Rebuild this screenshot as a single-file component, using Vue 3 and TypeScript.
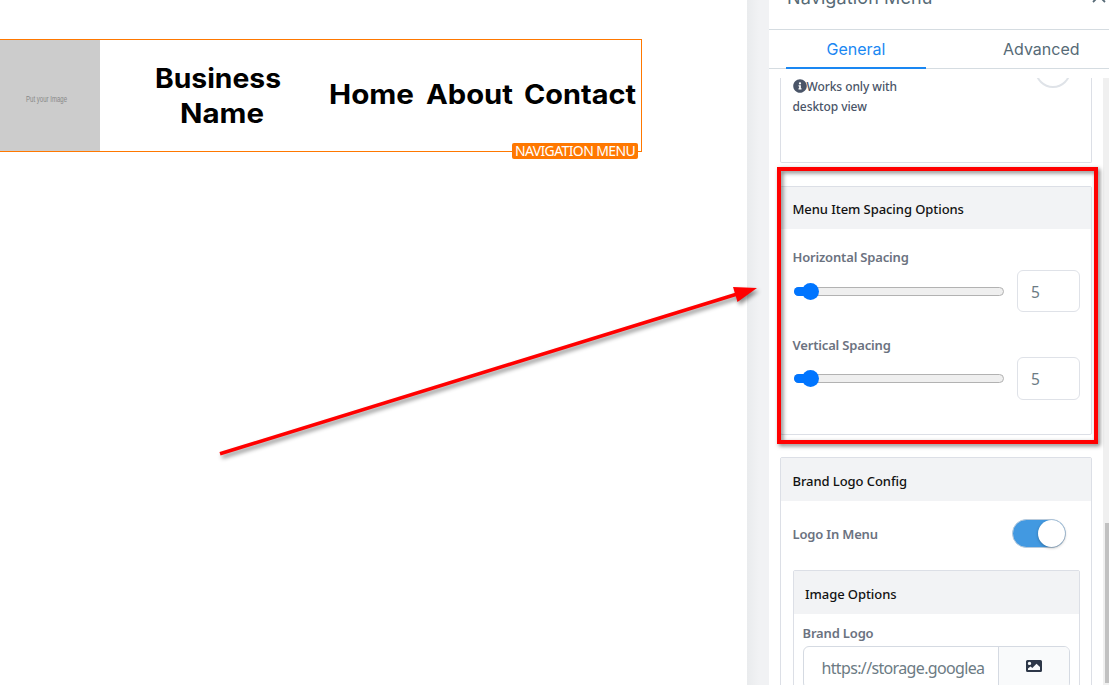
<template>
  <div class="editor">
    <main class="canvas">
      <nav class="site-nav">
        <div class="logo-box">
          <svg class="logo-text" width="41" height="10">
            <text x="0" y="8" textLength="41" lengthAdjust="spacingAndGlyphs">Put your Image</text>
          </svg>
        </div>
        <div class="brand">
          <svg v-for="w in brandWords" :key="w.text" class="word" :width="w.width" height="35">
            <text x="0" y="25" :textLength="w.width" lengthAdjust="spacingAndGlyphs">{{ w.text }}</text>
          </svg>
        </div>
        <div class="links">
          <svg v-for="w in links" :key="w.text" class="word" :width="w.width" height="35">
            <text x="0" y="25" :textLength="w.width" lengthAdjust="spacingAndGlyphs">{{ w.text }}</text>
          </svg>
        </div>
        <span class="nav-tag">NAVIGATION MENU</span>
      </nav>
    </main>
    <div class="gutter"></div>

    <aside class="panel">
      <header class="panel-header">
        <span class="panel-title">Navigation Menu</span>
        <svg class="close" width="14" height="14" viewBox="0 0 14 14">
          <path d="M1 1L13 13M13 1L1 13" />
        </svg>
      </header>
      <div class="tabs">
        <div class="tab active">General</div>
        <div class="tab second">Advanced</div>
      </div>

      <div class="scroll">
        <div class="cards">
          <section class="card hint-card">
            <p class="hint">
              <svg class="info" width="14" height="14" viewBox="0 0 512 512">
                <path
                  d="M256 8C119 8 8 119 8 256s111 248 248 248 248-111 248-248S393 8 256 8zm0 110a42 42 0 1 1 0 84 42 42 0 0 1 0-84zm56 254c0 7-5 12-12 12h-88c-7 0-12-5-12-12v-24c0-7 5-12 12-12h12v-64h-12c-7 0-12-5-12-12v-24c0-7 5-12 12-12h64c7 0 12 5 12 12v100h12c7 0 12 5 12 12v24z"
                />
              </svg><span>Works only with</span><br /><span>desktop view</span>
            </p>
            <span class="knob-off"></span>
          </section>

          <section class="card spacing-card">
            <h3 class="card-head">Menu Item Spacing Options</h3>
            <div v-for="s in sliders" :key="s.label" class="field">
              <label class="label">{{ s.label }}</label>
              <div class="slider-row">
                <div class="slider">
                  <div class="fill" :style="{ width: s.value * 2 + 7 + 'px' }"></div>
                  <div class="thumb"></div>
                </div>
                <div class="number">{{ s.value }}</div>
              </div>
            </div>
          </section>

          <section class="card logo-card">
            <h3 class="card-head">Brand Logo Config</h3>
            <div class="toggle-row">
              <span class="label">Logo In Menu</span>
              <span class="toggle"><span class="toggle-knob"></span></span>
            </div>
            <div class="card inner-card">
              <h3 class="card-head">Image Options</h3>
              <div class="label">Brand Logo</div>
              <div class="url-group">
                <div class="url"><div class="url-text">https://storage.googlea</div></div>
                <div class="pick">
                  <svg width="16" height="12" viewBox="0 0 16 12">
                    <path
                      fill-rule="evenodd"
                      d="M1.5 0h13A1.5 1.5 0 0 1 16 1.5v9a1.5 1.5 0 0 1-1.5 1.5h-13A1.5 1.5 0 0 1 0 10.5v-9A1.5 1.5 0 0 1 1.5 0zM3.5 1.7a1.7 1.7 0 1 0 0 3.4a1.7 1.7 0 0 0 0-3.4zM2 10h12V7L10.5 3.7L6.3 8L4.5 6.4L2 8.6z"
                    />
                  </svg>
                </div>
              </div>
            </div>
          </section>
        </div>
        <div class="scrollbar"><div class="scroll-thumb"></div></div>
      </div>
    </aside>

    <div class="highlight"></div>
    <svg class="arrow" width="1109" height="685" viewBox="0 0 1109 685">
      <path class="shaft" d="M220 453.8L738 293.8" />
      <path class="head" d="M757 288L733 287L737.5 302Z" />
    </svg>
  </div>
</template>

<script setup lang="ts">
interface Word {
  text: string
  width: number
}

interface Slider {
  label: string
  value: number
}

const brandWords: Word[] = [
  { text: 'Business', width: 126 },
  { text: 'Name', width: 84 }
]

const links: Word[] = [
  { text: 'Home', width: 85 },
  { text: 'About', width: 87 },
  { text: 'Contact', width: 112 }
]

const sliders: Slider[] = [
  { label: 'Horizontal Spacing', value: 5 },
  { label: 'Vertical Spacing', value: 5 }
]
</script>

<style>
body {
  margin: 0;
  overflow: hidden;
}
</style>

<style scoped>
.editor {
  position: relative;
  display: flex;
  width: 1109px;
  height: 685px;
  overflow: hidden;
  background: #fff;
  font-family: 'Noto Sans', 'Open Sans', sans-serif;
}

.editor * {
  box-sizing: border-box;
}

/* canvas */
.canvas {
  width: 747px;
  padding-top: 39px;
}

.site-nav {
  position: relative;
  display: flex;
  width: 642px;
  height: 113px;
  border: 1px solid #ff7800;
  border-left: none;
}

.logo-box {
  display: flex;
  width: 100px;
  padding: 6px 0 0 26px;
  align-items: center;
  background: #ccc;
}

.logo-text {
  overflow: visible;
  font: 8.5px 'Liberation Sans', sans-serif;
  fill: #888;
}

.brand {
  display: flex;
  flex-direction: column;
  align-items: center;
  width: 236px;
  padding: 23px 0 0;
  margin-right: -7px;
}

.word {
  display: block;
  flex: none;
  overflow: visible;
  font: 700 27px 'Inter', sans-serif;
}

.brand .word:last-child {
  margin-left: 8px;
}

.links {
  display: flex;
  gap: 11.5px;
  padding-top: 39px;
}

.nav-tag {
  position: absolute;
  right: 3px;
  bottom: -8px;
  width: 126px;
  height: 16px;
  border-radius: 2px;
  background: #ff7800;
  color: #fff;
  font-size: 14px;
  line-height: 16px;
  letter-spacing: -0.62px;
  text-align: center;
  white-space: nowrap;
}

.gutter {
  width: 22px;
  background: linear-gradient(90deg, #e9ebed, #f1f2f4 12px);
}

/* settings panel */
.panel {
  display: flex;
  flex-direction: column;
  width: 340px;
  background: #fff;
}

.panel-header {
  display: flex;
  justify-content: space-between;
  height: 30px;
  padding: 0 3px 0 18px;
  border-bottom: 1px solid #d5dce1;
  font-family: 'Inter', sans-serif;
  font-size: 18px;
  letter-spacing: 0.12px;
  color: #566a76;
}

.panel-title {
  margin-top: -13px;
  line-height: 22px;
}

.close {
  margin-top: -11px;
  stroke: #566a76;
  stroke-width: 1.8;
  fill: none;
}

.tabs {
  display: flex;
  height: 39px;
  padding-left: 17px;
  border-bottom: 1px solid #d5dce1;
  font-family: 'Inter', sans-serif;
  font-size: 16px;
  line-height: 39px;
  color: #566a76;
}

.tab {
  height: 39px;
}

.tab.active {
  width: 140px;
  border-bottom: 2px solid #1a87f2;
  color: #1a87f2;
  text-align: center;
}

.tab.second {
  margin-left: 77px;
}

.scroll {
  display: flex;
  justify-content: space-between;
  height: 607px;
  margin-top: 9px;
  padding-left: 11px;
  overflow: hidden;
}

.cards {
  width: 312px;
}

.card {
  border: 1px solid #dcdfe6;
  border-radius: 2px;
}

.card-head {
  display: flex;
  align-items: center;
  height: 42px;
  margin: 0;
  padding: 2px 12px 0 11.5px;
  background: #f2f3f5;
  color: #111;
  font-size: 13px;
  font-weight: 500;
  letter-spacing: -0.07px;
  white-space: nowrap;
}

.hint-card {
  display: flex;
  justify-content: space-between;
  height: 85px;
  margin-bottom: 23px;
  padding: 0 20px 0 11.5px;
  border-top: none;
  border-radius: 0 0 2px 2px;
}

.hint {
  margin: -1px 0 0;
  color: #4a5568;
  font-size: 12px;
  font-weight: 500;
  line-height: 20px;
  letter-spacing: -0.08px;
  white-space: nowrap;
}

.info {
  vertical-align: -2px;
  fill: #4a5568;
}

.knob-off {
  width: 36px;
  height: 36px;
  margin-top: -26px;
  border: 2px solid #dfe3e8;
  border-radius: 50%;
}

.spacing-card {
  height: 249px;
  margin-bottom: 22px;
}

.field {
  height: 87px;
  padding: 18px 11px 0 11.5px;
}

.field + .field {
  padding-top: 19px;
}

.label {
  display: block;
  color: #6b7280;
  font-size: 13px;
  font-weight: 600;
  line-height: 20px;
  letter-spacing: -0.17px;
  white-space: nowrap;
}

.slider-row {
  display: flex;
  align-items: center;
  justify-content: space-between;
  height: 42px;
  margin-top: 3px;
}

.field + .field .slider-row {
  height: 43px;
  margin-top: 2px;
}

.slider {
  display: flex;
  align-items: center;
  width: 210px;
  height: 9px;
  margin-left: 1px;
  border: 1px solid #b2b2b2;
  border-radius: 5px;
  background: #efefef;
}

.field + .field .slider {
  margin-top: -1px;
}

.fill {
  flex: none;
  height: 9px;
  margin-left: -1px;
  border-radius: 5px 0 0 5px;
  background: #0075ff;
}

.thumb {
  flex: none;
  width: 17px;
  height: 17px;
  margin-left: -8.5px;
  border-radius: 50%;
  background: #0075ff;
}

.number {
  width: 63px;
  height: 100%;
  padding-left: 13px;
  border: 1px solid #dfe2e8;
  border-radius: 6px;
  color: #6c7b84;
  font-size: 15.5px;
  line-height: 42px;
}

.logo-card {
  height: 300px;
}

.logo-card > .card-head {
  height: 43px;
}

.toggle-row {
  display: flex;
  align-items: center;
  justify-content: space-between;
  height: 69px;
  padding: 0 25px 4px 11.5px;
}

.toggle {
  display: flex;
  justify-content: flex-end;
  width: 54px;
  height: 29px;
  border: 1px solid #b9cbdc;
  border-radius: 15px;
  background: #4299e1;
}

.toggle-knob {
  width: 27px;
  height: 27px;
  border-radius: 50%;
  background: #fff;
  box-shadow: 0 1px 3px rgba(0, 0, 0, 0.3);
}

.inner-card {
  height: 200px;
  margin: 0 11px 0 12px;
}

.inner-card .card-head {
  height: 43px;
  padding: 3px 0 0 11px;
}

.inner-card .label {
  margin: 9px 0 0 8.5px;
}

.url-group {
  display: flex;
  width: 267px;
  height: 43px;
  margin: 3px 0 0 9px;
  border: 1px solid #d5dae2;
  border-radius: 6px;
}

.url {
  width: 195px;
  padding: 0 13px 0 17.5px;
  border-right: 1px solid #d5dae2;
}

.url-text {
  color: #6c7b84;
  font-size: 16px;
  line-height: 42px;
  letter-spacing: -0.65px;
  white-space: nowrap;
}

.pick {
  display: flex;
  flex: 1;
  justify-content: center;
  padding-top: 13px;
  background: #f9fafb;
  border-radius: 0 5px 5px 0;
  fill: #2d3748;
}

.scrollbar {
  width: 6px;
  padding: 445px 0 0 2px;
  background: #f0f0f0;
}

.scroll-thumb {
  height: 160px;
  background: #c1c1c1;
}

/* annotations over the page */
.highlight {
  position: absolute;
  left: 777px;
  top: 167px;
  width: 321px;
  height: 277px;
  border: 4px solid #f00;
  filter: drop-shadow(2px 2px 2px rgba(0, 0, 0, 0.5));
}

.arrow {
  position: absolute;
  left: 0;
  top: 0;
  filter: drop-shadow(2px 3px 2px rgba(0, 0, 0, 0.45));
}

.shaft {
  stroke: #f00;
  stroke-width: 3.6;
}

.head {
  fill: #f00;
}
</style>
